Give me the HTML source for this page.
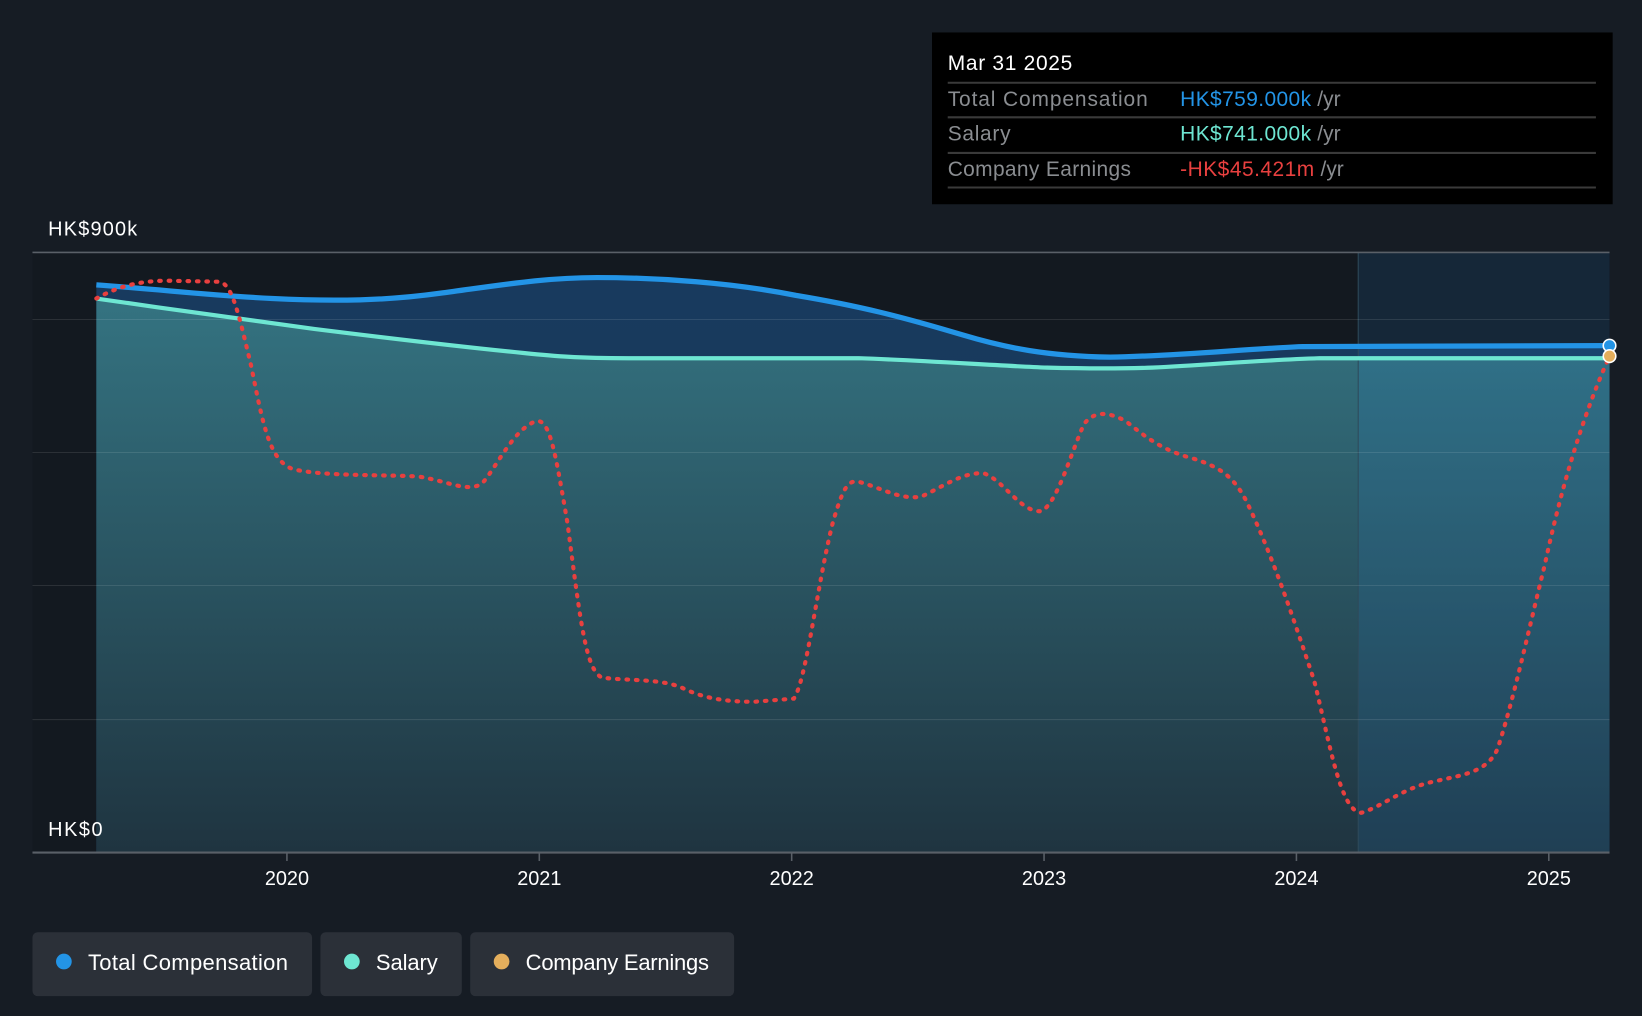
<!DOCTYPE html>
<html><head><meta charset="utf-8"><style>
html,body{margin:0;padding:0;background:#161c24;width:1642px;height:1016px;overflow:hidden}
svg{display:block;font-family:"Liberation Sans",Arial,sans-serif}
</style></head><body>
<svg width="1642" height="1016" viewBox="0 0 1568 970" preserveAspectRatio="none" xmlns="http://www.w3.org/2000/svg">
<defs>
<linearGradient id="gs" x1="0" y1="0" x2="0" y2="1">
<stop offset="0" stop-color="#347381"/><stop offset="1" stop-color="#1f3440"/>
</linearGradient>
<linearGradient id="gt" x1="0" y1="0" x2="0" y2="1">
<stop offset="0" stop-color="#183a5e"/><stop offset="1" stop-color="#183656"/>
</linearGradient>
</defs>
<rect width="1568" height="970" fill="#161c24"/>
<rect x="31" y="241" width="1506" height="573" fill="#131920"/>
<path d="M92,272 C160,277 200,282 260,285 C320,288 370,287 420,280 C480,272 520,265 570,265 C630,265 700,270 760,282 C820,292 860,302 920,320 C960,332 1000,340 1060,341 C1120,340 1180,334 1240,331 C1270,330 1290,330 1537,330 L1537,814 L92,814 Z" fill="url(#gt)"/>
<path d="M92,285 C160,295 220,303 300,314 C380,324 450,332 500,337 C530,340 550,342 600,342 L820,342 C880,344 950,349 1000,351 C1040,352 1070,352 1100,351 C1160,348 1200,344 1260,342 L1537,342 L1537,814 L92,814 Z" fill="url(#gs)"/>
<rect x="1297" y="241" width="240" height="573" fill="#2a8ee0" opacity="0.13"/>
<line x1="1297" y1="241" x2="1297" y2="814" stroke="#2e4a5a" stroke-width="1"/>
<g stroke="#ffffff" stroke-opacity="0.1" stroke-width="1">
<line x1="31" y1="305" x2="1537" y2="305"/><line x1="31" y1="432" x2="1537" y2="432"/>
<line x1="31" y1="559" x2="1537" y2="559"/><line x1="31" y1="687" x2="1537" y2="687"/>
</g>
<line x1="31" y1="241" x2="1537" y2="241" stroke="#5a6068" stroke-width="1.5"/>
<line x1="31" y1="814" x2="1537" y2="814" stroke="#5a6068" stroke-width="2"/>
<g stroke="#5a6068" stroke-width="1.5">
<line x1="274" y1="814" x2="274" y2="822"/><line x1="515" y1="814" x2="515" y2="822"/><line x1="756" y1="814" x2="756" y2="822"/>
<line x1="997" y1="814" x2="997" y2="822"/><line x1="1238" y1="814" x2="1238" y2="822"/><line x1="1479" y1="814" x2="1479" y2="822"/>
</g>
<path d="M92,272 C160,277 200,282 260,285 C320,288 370,287 420,280 C480,272 520,265 570,265 C630,265 700,270 760,282 C820,292 860,302 920,320 C960,332 1000,340 1060,341 C1120,340 1180,334 1240,331 C1270,330 1290,330 1537,330" fill="none" stroke="#2394e6" stroke-width="5"/>
<path d="M92,285 C160,295 220,303 300,314 C380,324 450,332 500,337 C530,340 550,342 600,342 L820,342 C880,344 950,349 1000,351 C1040,352 1070,352 1100,351 C1160,348 1200,344 1260,342 L1537,342" fill="none" stroke="#6ee6d2" stroke-width="4"/>
<path d="M92,285 C110,275 130,268 160,268 L210,269 C222,272 228,300 240,350 C252,410 258,440 280,448 C310,455 370,453 400,455 C430,460 445,470 460,462 C475,445 490,410 512,402 C525,400 530,430 542,500 C555,600 560,640 575,647 C600,650 630,648 650,656 C670,666 690,670 720,670 L758,667 C770,650 780,560 795,500 C805,465 810,458 820,460 C840,465 860,478 880,474 C900,465 920,450 940,452 C960,460 975,490 995,488 C1010,478 1020,440 1035,405 C1045,392 1058,393 1075,402 C1095,418 1110,430 1140,438 C1165,446 1178,455 1190,478 C1215,530 1235,590 1255,650 C1270,710 1280,775 1300,776 C1320,770 1340,752 1370,746 C1395,740 1420,738 1430,715 C1445,670 1460,600 1475,540 C1490,470 1510,400 1537,340" fill="none" stroke="#e8403f" stroke-width="4" stroke-dasharray="1.5 7.5" stroke-linecap="round"/>
<circle cx="1537" cy="330" r="6" fill="#2394e6" stroke="#fff" stroke-width="1.5"/>
<circle cx="1537" cy="340" r="6" fill="#e4ae5c" stroke="#fff" stroke-width="1.5"/>
<g fill="#ffffff" font-size="19">
<text x="46" y="225" textLength="85">HK$900k</text>
<text x="46" y="798" textLength="52">HK$0</text>
</g>
<g fill="#ffffff" font-size="19" text-anchor="middle">
<text x="274" y="845">2020</text><text x="515" y="845">2021</text><text x="756" y="845">2022</text>
<text x="997" y="845">2023</text><text x="1238" y="845">2024</text><text x="1479" y="845">2025</text>
</g>
<rect x="890" y="31" width="650" height="164" fill="#000"/>
<text x="905" y="67" fill="#fff" font-size="20" textLength="119">Mar 31 2025</text>
<g stroke="#3a3a3a" stroke-width="2">
<line x1="905" y1="79" x2="1524" y2="79"/><line x1="905" y1="112" x2="1524" y2="112"/>
<line x1="905" y1="146" x2="1524" y2="146"/><line x1="905" y1="179" x2="1524" y2="179"/>
</g>
<g font-size="20">
<text x="905" y="101" fill="#8a8d91" textLength="191">Total Compensation</text>
<text x="1127" y="101" fill="#2394e6"><tspan textLength="125">HK$759.000k</tspan> <tspan fill="#8a8d91">/yr</tspan></text>
<text x="905" y="134" fill="#8a8d91" textLength="60">Salary</text>
<text x="1127" y="134" fill="#6ee6d2"><tspan textLength="125">HK$741.000k</tspan> <tspan fill="#8a8d91">/yr</tspan></text>
<text x="905" y="168" fill="#8a8d91" textLength="175">Company Earnings</text>
<text x="1127" y="168" fill="#e8403f"><tspan textLength="128">-HK$45.421m</tspan> <tspan fill="#8a8d91">/yr</tspan></text>
</g>
<rect x="31" y="890" width="267" height="61" rx="5" fill="#2b3038"/>
<rect x="306" y="890" width="135" height="61" rx="5" fill="#2b3038"/>
<rect x="449" y="890" width="252" height="61" rx="5" fill="#2b3038"/>
<circle cx="61" cy="918" r="7.5" fill="#2394e6"/>
<circle cx="336" cy="918" r="7.5" fill="#6ee6d2"/>
<circle cx="479" cy="918" r="7.5" fill="#e4ae5c"/>
<g fill="#fff" font-size="21">
<text x="84" y="926" textLength="191">Total Compensation</text>
<text x="359" y="926" textLength="59">Salary</text>
<text x="502" y="926" textLength="175">Company Earnings</text>
</g>
</svg>
</body></html>
